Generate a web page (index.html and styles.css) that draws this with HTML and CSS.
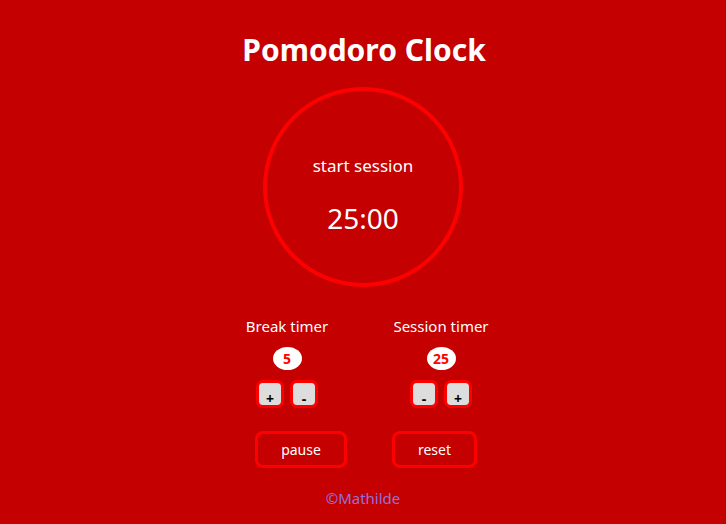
FILE: index.html
```html
<!DOCTYPE html>
<html>
<head>
<meta charset="utf-8">
<link rel="stylesheet" href="styles.css">
</head>
<body>
<main class="app">
  <h1 class="title">Pomodoro Clock</h1>
  <div class="clock">
    <p class="status">start session</p>
    <p class="time">25:00</p>
  </div>
  <div class="settings">
    <div class="setting">
      <p class="label">Break timer</p>
      <span class="value">5</span>
      <div class="steps">
        <button class="step">+</button>
        <button class="step">-</button>
      </div>
    </div>
    <div class="setting">
      <p class="label">Session timer</p>
      <span class="value">25</span>
      <div class="steps">
        <button class="step">-</button>
        <button class="step">+</button>
      </div>
    </div>
  </div>
  <div class="controls">
    <button class="ctrl pause">pause</button>
    <button class="ctrl reset">reset</button>
  </div>
  <footer class="footer">©Mathilde</footer>
</main>
</body>
</html>
```
FILE: styles.css
```css
html, body {
  margin: 0;
  padding: 0;
  height: 100%;
  background: #c40000;
}
body {
  font-family: "Noto Sans", "DejaVu Sans", sans-serif;
  color: #fff;
}
.app {
  display: flex;
  flex-direction: column;
  align-items: center;
  padding-top: 30px;
}
.title {
  margin: 0;
  font-size: 30px;
  font-weight: 700;
  line-height: 40px;
  transform: translateX(1px);
}
.clock {
  margin-top: 17px;
  width: 192px;
  height: 192px;
  border: 4px solid #ff0000;
  border-radius: 50%;
  display: flex;
  flex-direction: column;
  align-items: center;
}
.status {
  margin: 65px 0 0;
  font-size: 17px;
  line-height: 20px;
}
.time {
  margin: 24px 0 0;
  font-size: 28px;
  line-height: 36px;
}
.settings {
  margin-top: 29px;
  display: flex;
  gap: 54px;
  transform: translateX(1px);
}
.setting {
  width: 100px;
  display: flex;
  flex-direction: column;
  align-items: center;
}
.label {
  margin: 0;
  font-size: 15px;
  line-height: 20px;
}
.value {
  margin-top: 11px;
  width: 29px;
  height: 23px;
  border-radius: 50%;
  background: #fff;
  color: #ff0000;
  font-weight: 700;
  font-size: 14px;
  line-height: 23px;
  text-align: center;
}
.steps {
  margin-top: 10px;
  display: flex;
  gap: 6px;
}
.step {
  width: 28px;
  height: 28px;
  padding: 9px 0 0;
  border: 3px solid #ff0000;
  border-radius: 7px;
  background: #dddddd;
  color: #000;
  font-family: "Noto Sans", "DejaVu Sans", sans-serif;
  font-weight: 700;
  font-size: 14px;
  line-height: 14px;
}
.controls {
  margin-top: 23px;
  display: flex;
  gap: 45px;
  transform: translateX(3px);
}
.ctrl {
  height: 37px;
  border: 3px solid #ff0000;
  border-radius: 8px;
  background: transparent;
  color: #fff;
  font-family: "Noto Sans", "DejaVu Sans", sans-serif;
  font-size: 14px;
  padding: 0;
}
.pause { width: 92px; }
.reset { width: 85px; }
.footer {
  margin-top: 20px;
  color: #9370db;
  font-size: 15px;
  line-height: 20px;
}
```
